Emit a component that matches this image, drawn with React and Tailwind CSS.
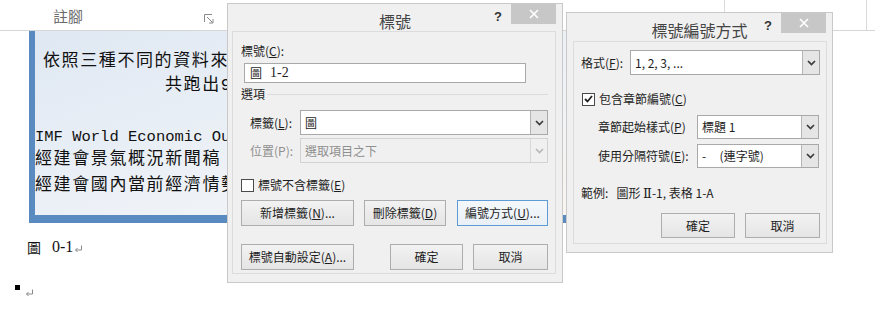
import React from 'react';

const ui = "font-['Noto_Sans_CJK_TC',sans-serif]";

const ReturnMark = () => (
  <svg width="9" height="8" viewBox="0 0 9 8" className="block">
    <path d="M7.5 0.5v4.5H1.5M3.5 3l-2 2 2 2" fill="none" stroke="#8a8a8a" strokeWidth="1" />
  </svg>
);

const Chevron = ({ disabled }) => (
  <svg width="9" height="6" viewBox="0 0 9 6">
    <path d="M1 1l3.5 3.5L8 1" fill="none" stroke={disabled ? '#b8b8b8' : '#3a3a3a'} strokeWidth="1.7" />
  </svg>
);

const Select = ({ children, className, disabled }) => (
  <div
    className={`flex border ${
      disabled ? 'border-[#d2d2d2] bg-[#f0f0f0] text-[#8f8f8f]' : 'border-[#a9a9a9] bg-white text-[#1e1e1e]'
    } ${className}`}
  >
    <div className="flex-1 flex items-center pl-[4px] text-[12px] leading-none whitespace-pre">{children}</div>
    <div
      className={`w-[17px] flex items-center justify-center border-l ${
        disabled ? 'border-[#d8d8d8] bg-[#f0f0f0]' : 'border-[#b5b5b5] bg-[#e5e5e5]'
      }`}
    >
      <Chevron disabled={disabled} />
    </div>
  </div>
);

const Btn = ({ children, className, focus }) => (
  <div
    className={`flex items-center justify-center border text-[12px] leading-none text-[#1e1e1e] ${
      focus ? 'border-[#5c9bd6] bg-[linear-gradient(#f4f8fb,#e9f0f6)]' : 'border-[#adadad] bg-[linear-gradient(#f2f2f2,#e5e5e5)]'
    } ${className}`}
  >
    {children}
  </div>
);

const Check = ({ checked }) => (
  <div className="w-[13px] h-[13px] border border-[#4a4a4a] bg-white flex items-center justify-center">
    {checked && (
      <svg width="9" height="8" viewBox="0 0 9 8">
        <path d="M1 4l2.5 2.5L8 1" fill="none" stroke="#222" strokeWidth="1.8" />
      </svg>
    )}
  </div>
);

const TitleBar = ({ title, className }) => (
  <div className={`grid grid-cols-[1fr_auto_1fr] ${className}`}>
    <div />
    <div className="text-[16px] leading-[20px] text-[#444] pt-[7px]">{title}</div>
    <div className="flex justify-end items-start">
      <span className="font-['Liberation_Sans',sans-serif] font-bold text-[13px] leading-none text-[#333] mt-[6px] mr-[9px]">?</span>
      <div className="w-[45px] h-[20px] mr-[6px] bg-[#c7c7c7] flex items-center justify-center">
        <svg width="10" height="10" viewBox="0 0 10 10">
          <path d="M1 1l8 8M9 1l-8 8" stroke="#fff" strokeWidth="1.6" />
        </svg>
      </div>
    </div>
  </div>
);

const CaptionDialog = () => (
  <div className={`absolute left-[227px] top-[3px] w-[336px] h-[280px] bg-[#f0f0f0] border border-[#c9c9c9] ${ui}`}>
    <TitleBar title="標號" className="h-[27px]" />
    <div className="ml-[4px] w-[324px] h-[243px] border border-[#dcdcdc] flex flex-col text-[12px] text-[#1e1e1e]">
      <div className="pl-[8px] pt-[11px] leading-[16px]">
        標號(<u>C</u>):
      </div>
      <div className="ml-[11px] mt-[4px] w-[282px] h-[20px] border border-[#a9a9a9] bg-white flex items-center pl-[5px]">
        <span className="text-[12px] leading-none">圖</span>
        <span className="ml-[8px] font-['Liberation_Serif',serif] text-[14px] leading-none">1-2</span>
      </div>
      <div className="mt-[3px] pl-[8px] flex items-center leading-[16px]">
        <span>選項</span>
        <div className="flex-1 h-px bg-[#dcdcdc] ml-[2px] mr-[7px]" />
      </div>
      <div className="mt-[8px] flex items-center">
        <span className="w-[67px] pl-[17px] leading-[16px]">
          標籤(<u>L</u>):
        </span>
        <Select className="w-[248px] h-[25px]">圖</Select>
      </div>
      <div className="mt-[3px] flex items-center">
        <span className="w-[67px] pl-[17px] leading-[16px] text-[#8f8f8f]">位置(P):</span>
        <Select disabled className="w-[248px] h-[25px]">
          選取項目之下
        </Select>
      </div>
      <div className="mt-[14px] pl-[8px] flex items-center">
        <Check />
        <span className="ml-[4px] leading-[16px]">
          標號不含標籤(<u>E</u>)
        </span>
      </div>
      <div className="mt-[7px] pl-[8px] flex">
        <Btn className="w-[113px] h-[26px]">
          新增標籤(<u>N</u>)...
        </Btn>
        <Btn className="ml-[10px] w-[82px] h-[26px]">
          刪除標籤(<u>D</u>)
        </Btn>
        <Btn focus className="ml-[11px] w-[91px] h-[26px]">
          編號方式(<u>U</u>)...
        </Btn>
      </div>
      <div className="mt-[18px] pl-[8px] flex">
        <Btn className="w-[113px] h-[26px]">
          標號自動設定(<u>A</u>)...
        </Btn>
        <Btn className="ml-[36px] w-[73px] h-[26px]">確定</Btn>
        <Btn className="ml-[10px] w-[75px] h-[26px]">取消</Btn>
      </div>
    </div>
  </div>
);

const NumberingDialog = () => (
  <div className={`absolute left-[566px] top-[12px] w-[267px] h-[241px] bg-[#f0f0f0] border border-[#c9c9c9] ${ui}`}>
    <TitleBar title="標號編號方式" className="h-[28px]" />
    <div className="ml-[6px] w-[254px] h-[203px] border border-[#dcdcdc] flex flex-col text-[12px] text-[#1e1e1e]">
      <div className="mt-[8px] flex items-center">
        <span className="w-[56px] pl-[7px] leading-[16px]">
          格式(<u>F</u>):
        </span>
        <Select className="w-[190px] h-[25px]">1, 2, 3, ...</Select>
      </div>
      <div className="mt-[16px] pl-[8px] flex items-center">
        <Check checked />
        <span className="ml-[4px] leading-[16px]">
          包含章節編號(<u>C</u>)
        </span>
      </div>
      <div className="mt-[8px] flex items-center">
        <span className="w-[123px] pl-[24px] leading-[16px]">
          章節起始樣式(<u>P</u>)
        </span>
        <Select className="w-[122px] h-[24px]">標題 1</Select>
      </div>
      <div className="mt-[5px] flex items-center">
        <span className="w-[123px] pl-[24px] leading-[16px]">
          使用分隔符號(<u>E</u>):
        </span>
        <Select className="w-[122px] h-[24px]">{'-     (連字號)'}</Select>
      </div>
      <div className="mt-[17px] pl-[7px] leading-[16px] whitespace-pre flex items-center">
        <span>{'範例:   圖形 '}</span>
        <span className="font-['DejaVu_Serif',serif] text-[13px] leading-none">Ⅱ</span>
        <span>{'-1, 表格 1-A'}</span>
      </div>
      <div className="mt-[12px] flex justify-end pr-[6px]">
        <Btn className="w-[74px] h-[25px]">確定</Btn>
        <Btn className="ml-[10px] w-[75px] h-[25px]">取消</Btn>
      </div>
    </div>
  </div>
);

export default function App() {
  const pic = "font-['Liberation_Mono','Noto_Sans_CJK_TC',monospace] text-[17px] tracking-[1.6px] text-[#111] whitespace-nowrap";
  return (
    <div className="relative w-[875px] h-[328px] bg-white overflow-hidden">
      {/* ribbon strip */}
      <div className="flex h-[31px] border-b border-[#d6d6d6]">
        <div className="w-[725px] border-r border-[#dadada]">
          <div className="w-[226px] h-full flex items-start">
            <span className={`${ui} ml-[53px] mt-[7px] text-[15px] leading-[18px] text-[#6b6b6b]`}>註腳</span>
            <svg width="10" height="10" viewBox="0 0 10 10" className="ml-auto mr-[12px] mt-[14px]">
              <path d="M0.5 8V0.5H8" fill="none" stroke="#8a8a8a" strokeWidth="1" />
              <path d="M3 3l5.5 5.5M9 5v4H5" fill="none" stroke="#8a8a8a" strokeWidth="1" />
            </svg>
          </div>
        </div>
        <div className="w-[142px] border-r border-[#dadada]" />
      </div>

      {/* picture in the document */}
      <div className="ml-[29px] w-[620px] h-[192px] border-l-[6px] border-b-[8px] border-[#5a8bc0] bg-[linear-gradient(160deg,#dfe8f3,#eef2f7_55%,#fbf6ef)] overflow-hidden flex flex-col">
        <div className={`${pic} mt-[19px] h-[24px] leading-[24px] pl-[8px]`}>依照三種不同的資料來源</div>
        <div className={`${pic} h-[24px] leading-[24px] pl-[130px]`}>共跑出9</div>
        <div className="font-['Liberation_Mono',monospace] text-[15.5px] text-[#111] mt-[28px] h-[22px] leading-[22px] whitespace-nowrap">
          IMF World Economic Out
        </div>
        <div className={`${pic} h-[24px] leading-[24px]`}>經建會景氣概況新聞稿：</div>
        <div className={`${pic} mt-[2px] h-[24px] leading-[24px]`}>經建會國內當前經濟情勢</div>
      </div>

      {/* caption */}
      <div className="mt-[14px] pl-[27px] h-[20px] flex items-center">
        <span className={`${ui} text-[14px] leading-none text-[#111]`}>圖</span>
        <span className="ml-[11px] font-['Liberation_Serif',serif] text-[16px] leading-none text-[#111]">0-1</span>
        <span className="ml-[1px] mt-[4px] flex">
          <ReturnMark />
        </span>
      </div>

      {/* empty paragraph */}
      <div className="mt-[28px] pl-[15px] flex items-start">
        <div className="w-[5px] h-[5px] bg-black" />
        <span className="ml-[5px] mt-[4px] flex">
          <ReturnMark />
        </span>
      </div>

      <CaptionDialog />
      <NumberingDialog />
    </div>
  );
}
